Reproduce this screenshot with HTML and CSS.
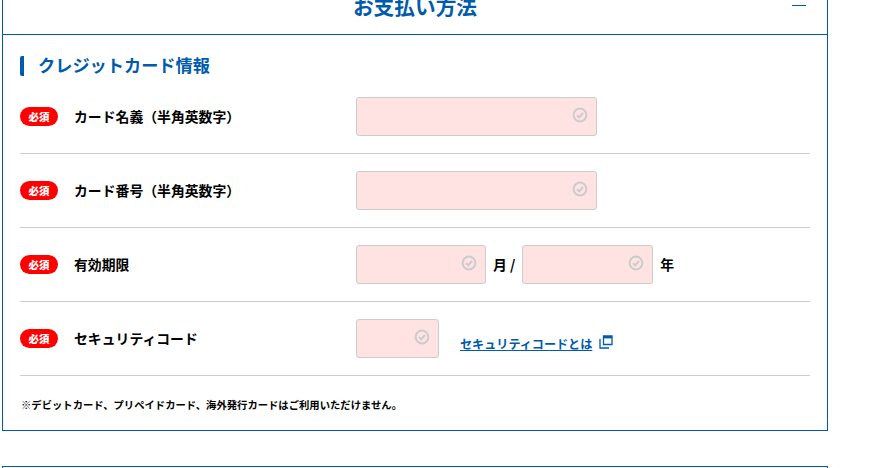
FILE: index.html
```html
<!DOCTYPE html>
<html lang="ja">

<head>
    <meta charset="UTF-8">
    <meta name="viewport" content="width=device-width, initial-scale=1.0">
    <title>お支払い方法</title>
    <link rel="stylesheet" href="styles.css">
</head>

<body>
    <section class="panel">
        <div class="panel-head">
            <h2>お支払い方法</h2>
            <span class="toggle"></span>
        </div>

        <div class="panel-body">
            <h3><span>クレジットカード情報</span></h3>

            <div class="row">
                <div class="row-label"><span class="required">必須</span><label>カード名義（半角英数字）</label></div>
                <div class="row-field">
                    <div class="input input-wide">
                        <svg class="check" viewBox="0 0 16 16"><circle cx="8" cy="8" r="6.4"/><path d="M5 8.2l2.2 2.1L11 6"/></svg>
                    </div>
                </div>
            </div>

            <div class="row">
                <div class="row-label"><span class="required">必須</span><label>カード番号（半角英数字）</label></div>
                <div class="row-field">
                    <div class="input input-wide">
                        <svg class="check" viewBox="0 0 16 16"><circle cx="8" cy="8" r="6.4"/><path d="M5 8.2l2.2 2.1L11 6"/></svg>
                    </div>
                </div>
            </div>

            <div class="row">
                <div class="row-label"><span class="required">必須</span><label>有効期限</label></div>
                <div class="row-field">
                    <div class="input input-month">
                        <svg class="check" viewBox="0 0 16 16"><circle cx="8" cy="8" r="6.4"/><path d="M5 8.2l2.2 2.1L11 6"/></svg>
                    </div>
                    <span class="unit unit-month">月 /</span>
                    <div class="input input-year">
                        <svg class="check" viewBox="0 0 16 16"><circle cx="8" cy="8" r="6.4"/><path d="M5 8.2l2.2 2.1L11 6"/></svg>
                    </div>
                    <span class="unit">年</span>
                </div>
            </div>

            <div class="row">
                <div class="row-label"><span class="required">必須</span><label>セキュリティコード</label></div>
                <div class="row-field">
                    <div class="input input-code">
                        <svg class="check" viewBox="0 0 16 16"><circle cx="8" cy="8" r="6.4"/><path d="M5 8.2l2.2 2.1L11 6"/></svg>
                    </div>
                    <a class="help-link" href="#">セキュリティコードとは</a>
                    <svg class="window-icon" viewBox="0 0 14 14"><path d="M4.500 1h8.500v8.500H4.500z"/><path class="window-bar" d="M4.500 2.200h8.500"/><path d="M1 4v9h9"/></svg>
                </div>
            </div>

            <p class="note">※デビットカード、プリペイドカード、海外発行カードはご利用いただけません。</p>
        </div>
    </section>

    <section class="panel panel-next"></section>
</body>

</html>
```

FILE: styles.css
```css
* {
    margin: 0;
    padding: 0;
    box-sizing: border-box;
}

body {
    font-family: "Noto Sans CJK JP", "Noto Sans", sans-serif;
    background-color: #fff;
    color: #000;
    height: 468px;
    overflow: hidden;
    padding-left: 2px;
}

.panel {
    width: 826px;
    border: 1px solid #005bac;
    margin-top: -20px;
}

.panel-next {
    margin-top: 35px;
    height: 40px;
}

.panel-head {
    display: flex;
    justify-content: center;
    align-items: center;
    height: 54px;
    border-bottom: 1px solid #005bac;
    position: relative;
}

.panel-head h2 {
    font-size: 20.700px;
    font-weight: bold;
    color: #005bac;
    line-height: 54px;
    margin-top: -3px;
}

.toggle {
    position: absolute;
    right: 21px;
    top: 24px;
    width: 14px;
    height: 1px;
    background-color: #005bac;
}

.panel-body {
    padding: 21px 17px 0 17px;
    height: 395px;
}

.panel-body h3 {
    font-size: 17.200px;
    font-weight: bold;
    line-height: 24px;
    color: #005bac;
    border-left: 4px solid #005bac;
    border-radius: 2px;
    padding-left: 14px;
    height: 20px;
    display: flex;
    align-items: center;
}

.panel-body h3 span {
    margin-top: -2px;
}

.row {
    display: flex;
    align-items: center;
    height: 74px;
    border-bottom: 1px solid #ccc;
}

.panel-body h3 + .row {
    margin-top: 4px;
}

.row-label {
    display: flex;
    align-items: center;
    width: 336px;
}

.row-label label {
    font-size: 13.850px;
    font-weight: bold;
    margin-top: -2px;
}

.required {
    width: 38px;
    height: 19px;
    margin-right: 16px;
    border-radius: 10px;
    background-color: #f00;
    color: #fff;
    font-size: 10.500px;
    font-weight: 900;
    line-height: 19px;
    text-align: center;
}

.row-field {
    display: flex;
    align-items: center;
}

.input {
    height: 39px;
    background-color: #ffe3e3;
    border: 1px solid #ccc;
    border-radius: 3px;
    display: flex;
    justify-content: flex-end;
    padding: 9px 8px 0 0;
}

.input-wide {
    width: 241px;
}

.input-month {
    width: 130px;
}

.input-year {
    width: 131px;
}

.input-code {
    width: 83px;
}

.check {
    width: 16px;
    height: 16px;
    fill: none;
    stroke: #ccc;
    stroke-width: 2;
}

.unit {
    font-size: 13.850px;
    font-weight: bold;
    margin-left: 7px;
    margin-top: -2px;
}

.unit-month {
    margin-right: 7px;
}

.help-link {
    font-size: 12.100px;
    font-weight: bold;
    color: #005bac;
    margin-left: 21px;
    margin-top: 10px;
}

.window-icon {
    width: 14px;
    height: 14px;
    margin-left: 7px;
    margin-top: 6px;
    fill: none;
    stroke: #005bac;
    stroke-width: 1.300;
}

.window-bar {
    stroke-width: 2.400;
}

.note {
    font-size: 10.340px;
    font-weight: bold;
    margin-top: 21px;
    padding-left: 1px;
    line-height: 16px;
}
```
